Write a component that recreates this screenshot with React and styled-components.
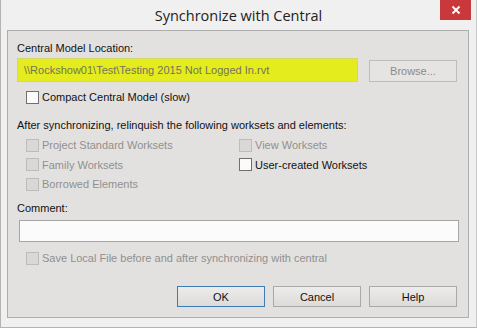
import styled, {createGlobalStyle} from "styled-components"

const Global = createGlobalStyle`
  html, body {
    margin: 0;
    padding: 0;
    background: #f0f0f0;
  }
  body {
    font-family: "Liberation Sans", Arial, sans-serif;
    font-size: 11px;
    color: #111;
  }
`

export default function App() {
  return (
    <>
      <Global/>
      <Window>
        <TitleBar>
          <Title>Synchronize with Central</Title>
          <CloseButton>
            <svg width="10" height="10" viewBox="0 0 10 10">
              <path d="M1.5 1.5 L8.5 8.5 M8.5 1.5 L1.5 8.5" stroke="#fff" strokeWidth="1.8"/>
            </svg>
          </CloseButton>
        </TitleBar>

        <Panel>
          <Label>Central Model Location:</Label>
          <LocationRow>
            <PathField>\\Rockshow01\Test\Testing 2015 Not Logged In.rvt</PathField>
            <Button $disabled $width={88}>Browse...</Button>
          </LocationRow>

          <Check $top={8}>
            <Box/>
            <span>Compact Central Model (slow)</span>
          </Check>

          <Label $top={14}>After synchronizing, relinquish the following worksets and elements:</Label>
          <Options>
            <Column>
              <Check $disabled><Box $disabled/><span>Project Standard Worksets</span></Check>
              <Check $disabled><Box $disabled/><span>Family Worksets</span></Check>
              <Check $disabled><Box $disabled/><span>Borrowed Elements</span></Check>
            </Column>
            <Column>
              <Check $disabled><Box $disabled/><span>View Worksets</span></Check>
              <Check><Box/><span>User-created Worksets</span></Check>
            </Column>
          </Options>

          <Label $top={10}>Comment:</Label>
          <CommentField/>

          <Check $disabled $top={9}>
            <Box $disabled/>
            <span>Save Local File before and after synchronizing with central</span>
          </Check>

          <Buttons>
            <Button $primary $width={88}>OK</Button>
            <Button $width={88}>Cancel</Button>
            <Button $width={88}>Help</Button>
          </Buttons>
        </Panel>
      </Window>
    </>
  )
}

const Window = styled.div`
  width: 477px;
  height: 328px;
  box-sizing: border-box;
  background: #f0f0f0;
  border-left: 1px solid #b4b4b4;
  border-bottom: 1px solid #b4b4b4;
  border-right: 1px solid #c8c8c8;
  padding: 0 6px 0 6px;
  display: flex;
  flex-direction: column;
`

const TitleBar = styled.div`
  height: 30px;
  display: flex;
  justify-content: center;
  position: relative;
`

const Title = styled.div`
  font-family: "Open Sans", "Noto Sans", sans-serif;
  font-size: 14.5px;
  line-height: 32px;
  color: #222;
`

const CloseButton = styled.div`
  position: absolute;
  right: -1px;
  top: 0;
  width: 31px;
  height: 20px;
  background: #c9383a;
  display: flex;
  align-items: center;
  justify-content: center;
`

const Panel = styled.div`
  width: 462px;
  height: 288px;
  box-sizing: border-box;
  border: 1px solid #adadad;
  background: #e3e1df;
  padding: 0 11px 0 9px;
  display: flex;
  flex-direction: column;
`

const Label = styled.div`
  margin-top: ${(p) => p.$top ?? 10}px;
  line-height: 14px;
  height: 14px;
  white-space: nowrap;
`

const LocationRow = styled.div`
  margin-top: 3px;
  display: flex;
  align-items: flex-start;
  justify-content: space-between;
`

const PathField = styled.div`
  width: 341px;
  height: 24px;
  box-sizing: border-box;
  background: #e5ec1d;
  border: 1px solid #d2d86a;
  color: #72745a;
  padding-left: 6px;
  line-height: 22px;
  white-space: nowrap;
`

const Button = styled.div`
  width: ${(p) => p.$width}px;
  height: ${(p) => (p.$disabled ? 22 : 21)}px;
  margin-top: ${(p) => (p.$disabled ? 2 : 0)}px;
  box-sizing: border-box;
  border: 1px solid ${(p) => (p.$primary ? "#3d7bb3" : p.$disabled ? "#bdbdbd" : "#a9a9a9")};
  background: ${(p) => (p.$disabled ? "#e6e4e2" : "linear-gradient(#ececec, #dddbd9)")};
  color: ${(p) => (p.$disabled ? "#8a8a8a" : "#111")};
  display: flex;
  align-items: center;
  justify-content: center;
`

const Check = styled.div`
  margin-top: ${(p) => p.$top ?? 0}px;
  margin-left: 9px;
  height: 14px;
  display: flex;
  align-items: center;
  gap: 3px;
  white-space: nowrap;
  color: ${(p) => (p.$disabled ? "#909090" : "#111")};
`

const Box = styled.span`
  width: 13px;
  height: 13px;
  box-sizing: border-box;
  flex: none;
  border: 1px solid ${(p) => (p.$disabled ? "#bcbcbc" : "#6f6f6f")};
  background: ${(p) => (p.$disabled ? "#dad8d6" : "#fbfbfb")};
`

const Options = styled.div`
  margin-top: 6px;
  display: grid;
  grid-template-columns: 222px 1fr;
`

const Column = styled.div`
  display: flex;
  flex-direction: column;
  gap: 5.5px;

  & > div {
    margin-left: 9px;
  }
  &:last-child > div {
    margin-left: 0;
  }
`

const CommentField = styled.div`
  margin: 5px 0 0 2px;
  width: 440px;
  height: 22px;
  box-sizing: border-box;
  border: 1px solid #a6a6a6;
  background: #fbfbfb;
`

const Buttons = styled.div`
  margin-top: 21px;
  display: flex;
  justify-content: flex-end;
  gap: 8px;
`
